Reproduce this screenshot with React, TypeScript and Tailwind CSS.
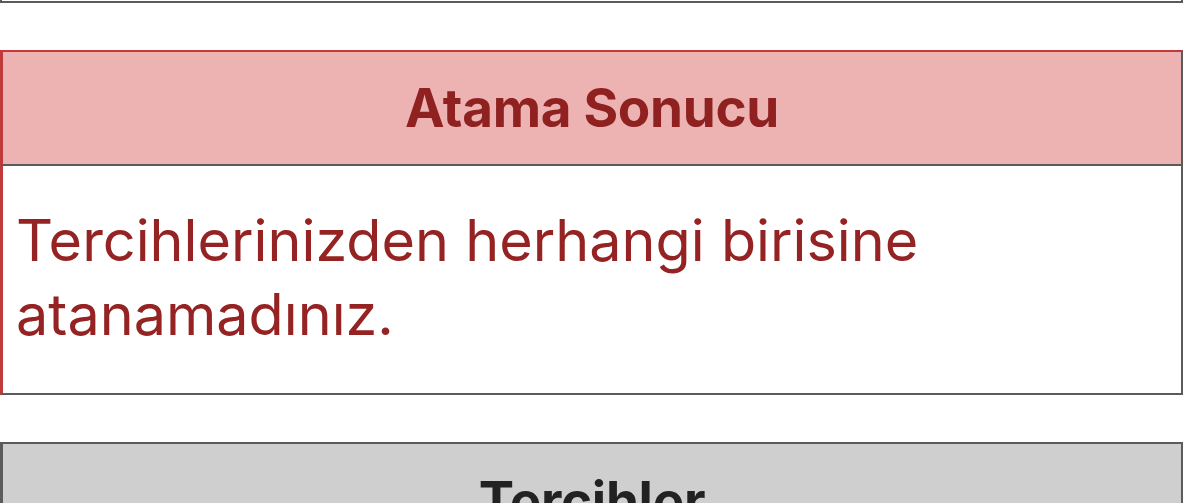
import React from "react";

// Sonuç kartı: başlık bandı + açıklama metni, altında tercih tablosunun başlığı
const FONT = { fontFamily: "Inter, 'Noto Sans', Arial, sans-serif" };

export default function App() {
  return (
    <div className="min-h-screen bg-white overflow-hidden" style={FONT}>
      <div className="w-[1183px]">
        {/* üstteki tablonun alt kenarı */}
        <div className="h-[3px] border-x-2 border-b-2 border-[#5b5b5b]" />

        {/* Atama sonucu */}
        <div className="mt-[47px]">
          <div className="h-[116px] flex items-center justify-center bg-[#edb3b3] border-t-2 border-l-[3px] border-t-[#c13a3b] border-l-[#c13a3b] border-r-2 border-b-2 border-r-[#5b5b5b] border-b-[#5b5b5b]">
            <h2 className="text-[53px] font-bold text-[#8f2121] leading-none tracking-[-0.3px]">Atama Sonucu</h2>
          </div>
          <div className="h-[229px] bg-white border-l-[3px] border-l-[#c13a3b] border-r-2 border-b-2 border-r-[#5b5b5b] border-b-[#5b5b5b] pl-[13px] pr-4 pt-[37px]">
            <p className="text-[57.5px] leading-[74px] text-[#952323]">
              Tercihlerinizden herhangi birisine atanamadınız.
            </p>
          </div>
        </div>

        {/* Tercihler */}
        <div className="mt-[47px] bg-[#cfcfcf] border-t-2 border-l-[3px] border-r-2 border-[#5b5b5b] h-[116px] flex items-center justify-center">
          <h2 className="text-[53px] font-bold text-[#222222] leading-none tracking-[-0.3px]">Tercihler</h2>
        </div>
      </div>
    </div>
  );
}
